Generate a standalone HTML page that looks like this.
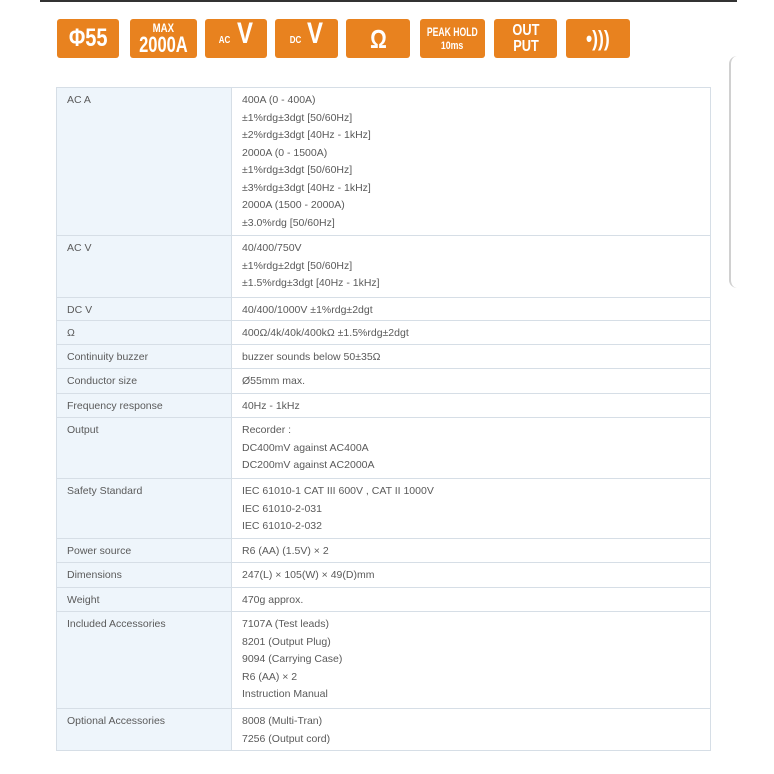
<!DOCTYPE html>
<html><head><style>
body{margin:0;width:774px;height:774px;background:#fff;position:relative;overflow:hidden;font-family:"Liberation Sans",sans-serif}
.top{position:absolute;left:40px;top:0;width:697px;height:2px;background:#333}
.arc{position:absolute;left:729px;top:56px;width:20px;height:232px;border-left:2px solid #d0d0d0;border-radius:8px 0 0 8px}
.b{position:absolute;top:19px;height:39px;background:#e8821f;border-radius:3px;color:#fff;font-weight:bold;text-align:center;box-sizing:border-box;display:flex;align-items:center;justify-content:center;flex-direction:column;line-height:1}
.b span,.b i{display:block;transform:scaleX(0.8);font-style:normal}
table{position:absolute;left:56px;top:87px;width:655px;border-collapse:collapse;font-size:10.5px;color:#5a5a5a}
td{border:1px solid #d6dee6;vertical-align:top;padding:4px 9px 0 10px;line-height:17.5px}
td:first-child{width:155px;background:#eef5fb}
</style></head><body>
<div class="top"></div><div class="arc"></div>
<div class="b" style="left:57px;width:62px"><span style="font-size:25px">Φ55</span></div>
<div class="b" style="left:130px;width:67px"><span style="font-size:12px">MAX</span><span style="font-size:22px;transform:scaleX(0.75)">2000A</span></div>
<div class="b" style="left:205px;width:62px;flex-direction:row;align-items:baseline"><span style="font-size:10px">AC&nbsp;</span><span style="font-size:30px">V</span></div>
<div class="b" style="left:275px;width:63px;flex-direction:row;align-items:baseline"><span style="font-size:10px">DC&nbsp;</span><span style="font-size:30px">V</span></div>
<div class="b" style="left:346px;width:64px"><span style="font-size:26px">Ω</span></div>
<div class="b" style="left:420px;width:65px"><span style="font-size:12px;transform:scaleX(0.72);white-space:nowrap">PEAK HOLD</span><span style="font-size:11px;margin-top:3px">10ms</span></div>
<div class="b" style="left:494px;width:63px"><span style="font-size:16px">OUT</span><span style="font-size:16px">PUT</span></div>
<div class="b" style="left:566px;width:64px"><span style="font-size:22px">•)))</span></div>
<table>
<tr style="height:148px"><td>AC A</td><td>400A (0 - 400A)<br>±1%rdg±3dgt [50/60Hz]<br>±2%rdg±3dgt [40Hz - 1kHz]<br>2000A (0 - 1500A)<br>±1%rdg±3dgt [50/60Hz]<br>±3%rdg±3dgt [40Hz - 1kHz]<br>2000A (1500 - 2000A)<br>±3.0%rdg [50/60Hz]</td></tr>
<tr style="height:62px"><td>AC V</td><td>40/400/750V<br>±1%rdg±2dgt [50/60Hz]<br>±1.5%rdg±3dgt [40Hz - 1kHz]</td></tr>
<tr style="height:23px"><td>DC V</td><td>40/400/1000V ±1%rdg±2dgt</td></tr>
<tr style="height:24px"><td>Ω</td><td>400Ω/4k/40k/400kΩ ±1.5%rdg±2dgt</td></tr>
<tr style="height:24px"><td>Continuity buzzer</td><td>buzzer sounds below 50±35Ω</td></tr>
<tr style="height:25px"><td>Conductor size</td><td>Ø55mm max.</td></tr>
<tr style="height:24px"><td>Frequency response</td><td>40Hz - 1kHz</td></tr>
<tr style="height:61px"><td>Output</td><td>Recorder :<br>DC400mV against AC400A<br>DC200mV against AC2000A</td></tr>
<tr style="height:60px"><td>Safety Standard</td><td>IEC 61010-1 CAT III 600V , CAT II 1000V<br>IEC 61010-2-031<br>IEC 61010-2-032</td></tr>
<tr style="height:24px"><td>Power source</td><td>R6 (AA) (1.5V) × 2</td></tr>
<tr style="height:25px"><td>Dimensions</td><td>247(L) × 105(W) × 49(D)mm</td></tr>
<tr style="height:24px"><td>Weight</td><td>470g approx.</td></tr>
<tr style="height:97px"><td>Included Accessories</td><td>7107A (Test leads)<br>8201 (Output Plug)<br>9094 (Carrying Case)<br>R6 (AA) × 2<br>Instruction Manual</td></tr>
<tr style="height:42px"><td>Optional Accessories</td><td>8008 (Multi-Tran)<br>7256 (Output cord)</td></tr>
</table>
</body></html>
